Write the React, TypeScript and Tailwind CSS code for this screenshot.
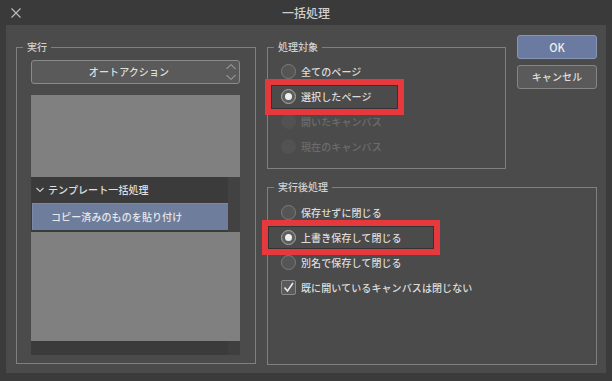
import React from "react";

const font = "font-['Noto_Sans_CJK_JP','Noto_Sans',sans-serif]";

function Radio({ label, selected = false, disabled = false }: { label: string; selected?: boolean; disabled?: boolean }) {
  return (
    <div className="flex items-center h-[25px] pl-[13px]">
      <div
        className={
          disabled
            ? "w-[15px] h-[15px] rounded-full bg-[#525252]"
            : selected
            ? "w-[15px] h-[15px] rounded-full border border-[#a9a9a9] bg-[#5e5e5e] flex items-center justify-center"
            : "w-[15px] h-[15px] rounded-full border border-[#7c7c7c] bg-[#555555]"
        }
      >
        {selected && <div className="w-[7px] h-[7px] rounded-full bg-[#f0f0f0]" />}
      </div>
      <span
        className={
          "ml-[5px] text-[10px] leading-[14px] font-medium tracking-[0.1px] " +
          (disabled ? "text-[#6c6c6c]" : "text-[#dcdcdc]")
        }
      >
        {label}
      </span>
    </div>
  );
}

function Legend({ children }: { children: React.ReactNode }) {
  return (
    <legend className="ml-[6px] px-[4px] text-[10px] leading-[14px] font-medium text-[#d2d2d2]">{children}</legend>
  );
}

export default function App() {
  return (
    <div className={"relative w-[612px] h-[381px] bg-[#3b3b3b] flex flex-col " + font}>
      {/* Title bar */}
      <div className="h-[25px] grid grid-cols-[1fr_auto_1fr] items-center bg-[#3a3a3a]">
        <div className="pl-[11px] flex items-center">
          <svg width="10" height="10" viewBox="0 0 10 10">
            <path d="M0.5 0.5 L9.5 9.5 M9.5 0.5 L0.5 9.5" stroke="#bdbdbd" strokeWidth="1.1" fill="none" />
          </svg>
        </div>
        <div className="text-[12px] leading-[16px] font-medium text-[#cfcfcf]">一括処理</div>
        <div />
      </div>

      {/* Body */}
      <div className="mx-[6px] h-[348px] bg-[#4b4b4b] flex pt-[10px] pl-[10px]">
        {/* Left fieldset */}
        <fieldset className="w-[240px] h-[324px] mt-[5px] border border-[#7f7f7f]">
          <Legend>実行</Legend>
          <div className="pl-[14px] pr-[15px]">
            <div className="mt-[6px] h-[24px] rounded-[3px] border border-[#8a8a8a] bg-[#5a5a5a] flex items-center">
              <div className="flex-1 text-center text-[10px] leading-[14px] font-medium tracking-[0.1px] text-[#dedede]">
                オートアクション
              </div>
              <svg width="10" height="18" viewBox="0 0 10 18" className="mr-[3px]">
                <path d="M0.5 6 L5 1.5 L9.5 6" stroke="#b4b4b4" strokeWidth="1" fill="none" />
                <path d="M0.5 12 L5 16.5 L9.5 12" stroke="#b4b4b4" strokeWidth="1" fill="none" />
              </svg>
            </div>

            <div className="mt-[11px] h-[260px] flex flex-col">
              <div className="h-[82px] bg-[#808080]" />
              <div className="flex bg-[#3b3b3b]">
                <div className="flex-1 flex flex-col">
                  <div className="h-[26px] flex items-center pl-[5px]">
                    <svg width="8" height="6" viewBox="0 0 8 6">
                      <path d="M0.5 1 L4 4.5 L7.5 1" stroke="#d0d0d0" strokeWidth="1.1" fill="none" />
                    </svg>
                    <span className="ml-[4px] text-[10px] leading-[14px] font-medium tracking-[0.1px] text-[#e0e0e0]">
                      テンプレート一括処理
                    </span>
                  </div>
                  <div className="ml-[1px] h-[27px] bg-[#6e7d9c] border-t border-l border-[#7d8aa6] flex items-center pl-[18px]">
                    <span className="text-[10px] leading-[14px] font-medium tracking-[0.1px] text-[#e8e8e8]">
                      コピー済みのものを貼り付け
                    </span>
                  </div>
                  <div className="h-[2px]" />
                </div>
                <div className="w-[12px] bg-[#424242]" />
              </div>
              <div className="h-[109px] bg-[#808080]" />
              <div className="h-[14px] flex bg-[#3b3b3b]">
                <div className="flex-1" />
                <div className="w-[12px] bg-[#3f3f3f]" />
              </div>
            </div>
          </div>
        </fieldset>

        {/* Right area */}
        <div className="ml-[11px] w-[330px] flex flex-col">
          <div className="flex">
            <fieldset className="w-[239px] h-[129px] mt-[5px] border border-[#7f7f7f]">
              <Legend>処理対象</Legend>
              <div className="pt-[5px]">
                <Radio label="全てのページ" />
                <Radio label="選択したページ" selected />
                <Radio label="開いたキャンバス" disabled />
                <Radio label="現在のキャンバス" disabled />
              </div>
            </fieldset>
            <div className="ml-[11px] w-[80px] flex flex-col gap-[6px]">
              <button className="h-[24px] rounded-[3px] border border-[#8896b6] bg-[#6a7aa0] text-[11px] leading-[14px] font-medium text-[#eeeeee]">
                OK
              </button>
              <button className="h-[24px] rounded-[3px] border border-[#858585] bg-[#5a5a5a] text-[10px] leading-[14px] font-medium tracking-[0.1px] text-[#dedede]">
                キャンセル
              </button>
            </div>
          </div>

          <fieldset className="mt-[11px] w-[330px] h-[185px] border border-[#7f7f7f]">
            <Legend>実行後処理</Legend>
            <div className="pt-[6px]">
              <Radio label="保存せずに閉じる" />
              <Radio label="上書き保存して閉じる" selected />
              <Radio label="別名で保存して閉じる" />
              <div className="flex items-center h-[25px] pl-[13px]">
                <div className="w-[15px] h-[15px] rounded-[2px] border border-[#8a8a8a] bg-[#5a5a5a] flex items-center justify-center">
                  <svg width="13" height="13" viewBox="0 0 13 13">
                    <path d="M2.5 6.5 L5.5 10 L11 2" stroke="#ececec" strokeWidth="1.6" fill="none" />
                  </svg>
                </div>
                <span className="ml-[5px] text-[10px] leading-[14px] font-medium tracking-[0.1px] text-[#dcdcdc]">
                  既に開いているキャンバスは閉じない
                </span>
              </div>
            </div>
          </fieldset>
        </div>
      </div>

      {/* Annotation boxes */}
      <div className="absolute left-[265px] top-[79px] w-[139px] h-[36px] border-[6px] border-[#e6393e]">
        <div className="w-full h-full border border-[#333333]" />
      </div>
      <div className="absolute left-[262px] top-[220px] w-[178px] h-[35px] border-[6px] border-[#e6393e]">
        <div className="w-full h-full border border-[#333333]" />
      </div>
    </div>
  );
}
